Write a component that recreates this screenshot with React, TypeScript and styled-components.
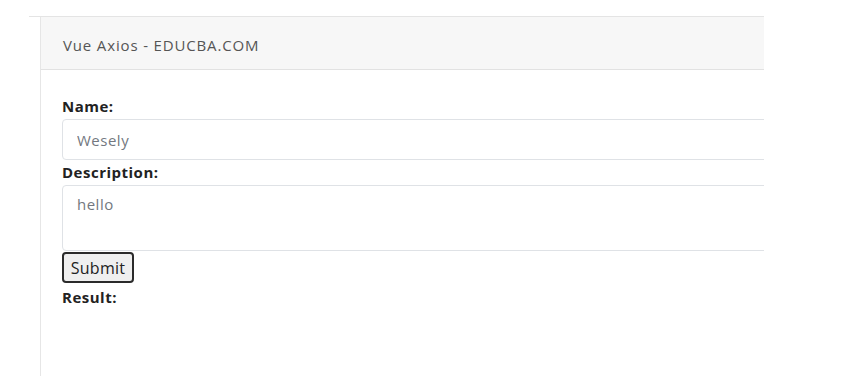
import React from "react";
import styled, { createGlobalStyle } from "styled-components";

const Global = createGlobalStyle`
  html, body { margin: 0; padding: 0; background: #fff; }
  body { font-family: "Open Sans", "Noto Sans", sans-serif; }
`;

const Page = styled.div`
  height: 376px;
  padding: 16px 0 0 29px;
  box-sizing: border-box;
`;

const Frame = styled.div`
  width: 735px;
  height: 360px;
  border-top: 1px solid #e4e4e4;
  box-sizing: border-box;
`;

const Card = styled.div`
  margin-left: 11px;
  height: 100%;
  border-left: 1px solid #e6e6e6;
  display: flex;
  flex-direction: column;
`;

const Header = styled.div`
  height: 53px;
  flex: none;
  box-sizing: border-box;
  background: #f7f7f7;
  border-bottom: 1px solid #e2e2e2;
  padding-top: 5px;
`;

const Title = styled.h1`
  margin: 0 0 0 22px;
  font-size: 15px;
  font-weight: 400;
  letter-spacing: 0.85px;
  line-height: 47px;
  color: #555;
`;

const Body = styled.div`
  padding: 26px 0 0 21px;
  display: flex;
  flex-direction: column;
  align-items: stretch;
  overflow: hidden;
`;

const Label = styled.label<{ $gap?: number }>`
  display: block;
  margin-top: ${(p) => p.$gap ?? 0}px;
  font-weight: 700;
  font-size: 15px;
  letter-spacing: 0.5px;
  line-height: 20px;
  color: #222;
`;

const TextInput = styled.input`
  width: calc(100% + 20px);
  height: 41px;
  margin-top: 3px;
  box-sizing: border-box;
  border: 1px solid #dfe2e6;
  border-radius: 4px;
  padding: 0 14px;
  font-family: inherit;
  font-size: 15px;
  letter-spacing: 0.5px;
  color: #737880;
  outline: none;
`;

const TextArea = styled.textarea`
  width: calc(100% + 20px);
  height: 66px;
  margin-top: 3px;
  box-sizing: border-box;
  border: 1px solid #dfe2e6;
  border-radius: 4px;
  padding: 8px 14px;
  font-family: inherit;
  font-size: 15px;
  letter-spacing: 0.5px;
  line-height: 20px;
  color: #737880;
  outline: none;
  resize: none;
  display: block;
`;

const SubmitButton = styled.button`
  align-self: flex-start;
  margin-top: 1px;
  width: 72px;
  height: 31px;
  box-sizing: border-box;
  border: 2px solid #2b2b2b;
  border-radius: 4px;
  background: #efefef;
  font-family: inherit;
  font-size: 16px;
  letter-spacing: 0.3px;
  line-height: 20px;
  color: #222;
  padding: 0;
`;

export default function App() {
  return (
    <>
      <Global />
      <Page>
        <Frame>
          <Card>
            <Header>
              <Title>Vue Axios - EDUCBA.COM</Title>
            </Header>
            <Body>
              <Label>Name:</Label>
              <TextInput defaultValue="Wesely" />
              <Label $gap={2}>Description:</Label>
              <TextArea defaultValue="hello" />
              <SubmitButton>Submit</SubmitButton>
              <Label $gap={4}>Result:</Label>
            </Body>
          </Card>
        </Frame>
      </Page>
    </>
  );
}
